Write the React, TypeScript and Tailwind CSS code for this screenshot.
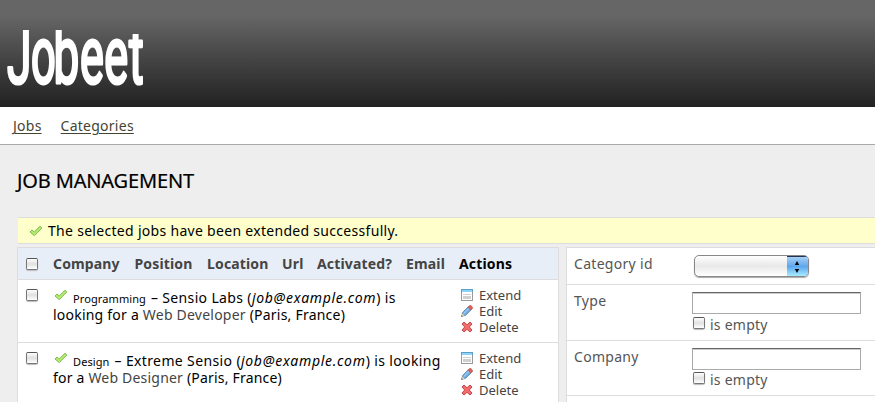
import type { ReactNode } from "react";

const LETTERS = [
  { char: "J", x: 7, width: 0.56, clip: "url(#tall)" },
  { char: "o", x: 31, width: 0.55, clip: "url(#tall)" },
  { char: "b", x: 53.6, width: 0.58, clip: "url(#tall)" },
  { char: "e", x: 80, width: 0.57, clip: "url(#tall)" },
  { char: "e", x: 104.3, width: 0.57, clip: "url(#tall)" },
  { char: "t", x: 129, width: 0.57, clip: "url(#short)" },
];

function Logo() {
  return (
    <svg width="150" height="107" viewBox="0 0 150 107" className="block" role="img" aria-label="Jobeet">
      <defs>
        <clipPath id="tall"><rect x="0" y="30" width="150" height="60" /></clipPath>
        <clipPath id="short"><rect x="120" y="34" width="23" height="56" /></clipPath>
      </defs>
      {LETTERS.map((l, i) => (
        <g key={i} clipPath={l.clip}>
          <text
            transform={`translate(${l.x} 82.8) scale(${l.width} 1)`}
            className="fill-white stroke-white stroke-[2.6px] font-[Roboto,sans-serif] text-[79px] [stroke-linejoin:round] [vector-effect:non-scaling-stroke]"
          >
            {l.char}
          </text>
        </g>
      ))}
    </svg>
  );
}

function Tick() {
  return (
    <svg width="14" height="12" viewBox="0 0 14 12" className="shrink-0">
      <path d="M1 7 3 5 5.2 7 11 1.3 12.8 3 5.3 10.6Z" fill="#b4ee70" stroke="#7db94c" strokeWidth="1" strokeLinejoin="round" />
    </svg>
  );
}

function WindowIcon() {
  return (
    <svg width="12" height="12" viewBox="0 0 12 12">
      <rect x=".5" y=".5" width="11" height="11" fill="#fff" stroke="#999" />
      <path d="M0 0h12v3H0z" fill="#5d9ec9" />
      <path d="M1 1h10v2H1z" fill="#8ed4f8" />
      <path d="M2 5h8v1H2zM2 7h8v3H2z" fill="#d0d0d0" />
    </svg>
  );
}

function PencilIcon() {
  return (
    <svg width="12" height="12" viewBox="0 0 12 12">
      <path d="M.8 11.2 1.7 7.4 7.3 1.8 10.2 4.7 4.6 10.3Z" fill="#72ace0" stroke="#4779ac" strokeWidth=".8" />
      <path d="m2.8 8.5 5.5-5.4" stroke="#b6dbf8" />
      <path d="m7 2.1 1.5-1.5q.8-.5 1.4 0L11.4 2q.5.6 0 1.4L9.9 5Z" fill="#d96259" stroke="#b84a44" strokeWidth=".6" />
      <path d="m.5 11.5.9-3 2.1 2.1Z" fill="#ead0ac" />
      <path d="m.2 11.8.5-1.6 1.1 1.1Z" fill="#333" />
    </svg>
  );
}

function CrossIcon() {
  return (
    <svg width="12" height="12" viewBox="0 0 12 12">
      <path d="M3 1 6 3.8 9 1 11 3 8.3 6 11 9 9 11 6 8.3 3 11 1 9 3.7 6 1 3Z" fill="#f36b6b" stroke="#c64848" strokeWidth="1" strokeLinejoin="round" />
    </svg>
  );
}

function Checkbox({ className = "" }: { className?: string }) {
  return (
    <input
      type="checkbox"
      className={`block size-3 shrink-0 appearance-none rounded-[2px] border border-[#777] border-t-[#555] bg-linear-to-b from-white via-[#e0e0e0] to-white shadow-[0_1px_1px_#bbb] ${className}`}
    />
  );
}

function Action({ icon, children }: { icon: ReactNode; children: ReactNode }) {
  return (
    <li className="flex h-4 items-center gap-[6px] text-[#444]">
      {icon}
      <a className="text-[13px] leading-4">{children}</a>
    </li>
  );
}

function JobRow({ children }: { children: ReactNode }) {
  return (
    <div className="flex h-[63px] border-b border-[#ddd]">
      <div className="w-[35px] pt-[9px] pl-2"><Checkbox /></div>
      <div className="w-[408px] pt-[9px] text-[14px] leading-[17px] whitespace-nowrap">{children}</div>
      <ul className="pt-[7px]">
        <Action icon={<WindowIcon />}>Extend</Action>
        <Action icon={<PencilIcon />}>Edit</Action>
        <Action icon={<CrossIcon />}>Delete</Action>
      </ul>
    </div>
  );
}

function FilterRow({ label, className, emptyClassName }: { label: string; className: string; emptyClassName: string }) {
  return (
    <div className={`flex border-b border-[#ddd] pl-[7px] ${className}`}>
      <label className="w-[118px] pt-[6px] text-[14px] leading-5 tracking-[0.3px]">{label}</label>
      <div className="pt-[7px]">
        <input className="block h-[22px] w-[169px] border border-[#aaa] border-t-[#666] bg-white shadow-[inset_0_1px_0_#ccc]" />
        <label className={`flex h-5 gap-[5px] pl-px text-[14px] leading-5 tracking-[0.25px] ${emptyClassName}`}>
          <Checkbox className="mt-[2px]" /> is empty
        </label>
      </div>
    </div>
  );
}

export default function App() {
  return (
    <div className="h-[402px] w-[875px] overflow-hidden bg-[#eee] font-['Noto_Sans',sans-serif] text-black">
      <header className="h-[107px] bg-linear-to-b from-[#666] from-15% to-[#222]">
        <Logo />
      </header>
      <nav className="flex h-[38px] gap-[19px] border-b border-[#aaa] bg-white pt-[9px] pl-[13px] text-[14px] leading-5 tracking-[0.25px] text-[#444433]">
        <a className="underline underline-offset-2">Jobs</a>
        <a className="underline underline-offset-2">Categories</a>
      </nav>
      <main className="pl-[17px]">
        <h1 className="h-[72px] pt-[23px] text-[20px] leading-[26px] tracking-[-0.15px] [-webkit-text-stroke:0.2px_black]">JOB MANAGEMENT</h1>
        <div className="ml-px flex h-[27px] items-center gap-[5px] border-y border-[#ddd] bg-[#ffffcc] pl-[11px] text-[14px] tracking-[0.3px]">
          <Tick />
          <span>The selected jobs have been extended successfully.</span>
        </div>
        <div className="mt-[3px] flex gap-[7px]">
          <section className="w-[542px] border border-[#ddd] bg-white">
            <div className="flex h-8 items-center border-b border-[#ddd] bg-[#e8eef7] text-[14px] font-bold tracking-[0.15px] text-[#444]">
              <div className="w-[35px] pl-2"><Checkbox /></div>
              <div className="w-[81.5px]">Company</div>
              <div className="w-[72.5px]">Position</div>
              <div className="w-[75px]">Location</div>
              <div className="w-[35px]">Url</div>
              <div className="w-[89px]">Activated?</div>
              <div className="w-[53px]">Email</div>
              <div className="text-black">Actions</div>
            </div>
            <JobRow>
              <div className="flex h-[17px] pl-px">
                <Tick />
                <span className="ml-[5px] pt-px text-[11px] tracking-[0.1px]">Programming</span>
                <span className="ml-[5px] tracking-[0.35px]">– Sensio Labs (<em className="tracking-[0.68px]">job@example.com</em>) is</span>
              </div>
              <div className="tracking-[0.22px]">looking for a <a className="text-[#444]">Web Developer</a> (Paris, France)</div>
            </JobRow>
            <JobRow>
              <div className="flex h-[17px] pl-px">
                <Tick />
                <span className="ml-[5px] pt-px text-[11px] tracking-[0.1px]">Design</span>
                <span className="ml-[5px] tracking-[0.37px]">– Extreme Sensio (<em className="tracking-[0.7px]">job@example.com</em>) is looking</span>
              </div>
              <div className="tracking-[0.2px]">for a <a className="text-[#444]">Web Designer</a> (Paris, France)</div>
            </JobRow>
          </section>
          <form className="h-[170px] flex-1 border-t border-l border-[#ddd] bg-white text-[#555]">
            <div className="flex h-[37px] border-b border-[#ddd] pl-[7px]">
              <label className="w-[119.5px] pt-[6px] text-[14px] leading-5 tracking-[0.3px]">Category id</label>
              <div className="mt-[7px] flex h-[22px] w-[115px] overflow-hidden rounded-[5px] border border-[#888] bg-linear-to-b from-white via-[#e8e8e8] to-white shadow-[0_1px_1px_#aaa]">
                <div className="ml-auto flex w-[21px] items-center justify-center border-t border-[#235] bg-linear-to-b from-[#a6cff4] via-[#5da7ee] to-[#a8ebff]">
                  <svg width="6" height="12" viewBox="0 0 6 12"><path d="M3 0 5.2 4H.8ZM.8 8h4.4L3 12Z" /></svg>
                </div>
              </div>
            </div>
            <FilterRow label="Type" className="h-[56px]" emptyClassName="mt-px" />
            <FilterRow label="Company" className="h-[55px]" emptyClassName="mt-0" />
          </form>
        </div>
      </main>
    </div>
  );
}
